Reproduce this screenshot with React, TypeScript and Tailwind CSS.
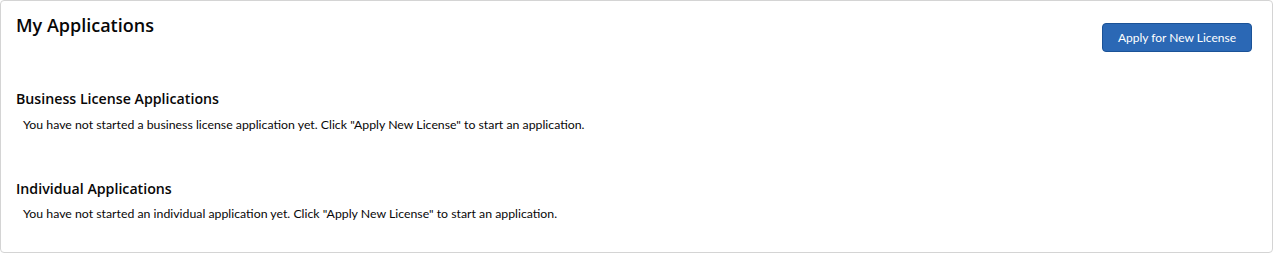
const heading = { fontFamily: '"Open Sans", "Noto Sans", sans-serif' };

export default function App() {
  return (
    <div className="h-[254px] w-[1273px] bg-white" style={{ fontFamily: 'Lato, "Open Sans", sans-serif' }}>
      <div className="flex h-[253px] flex-col rounded border border-[#d4d4d4] px-[15px] pt-[13px] text-[#080707]">
        <div className="flex items-start justify-between">
          <h1 className="text-[18px] font-semibold leading-[22px]" style={heading}>
            My Applications
          </h1>
          <button
            type="button"
            className="mt-[9px] mr-[5px] h-[29px] rounded-[4px] border border-[#1b5297] bg-[#2b68b5] px-[15px] text-[12px] leading-[27px] text-white"
          >
            Apply for New License
          </button>
        </div>

        <section className="mt-[37px]">
          <h2 className="text-[14.2px] font-semibold leading-[20px]" style={heading}>
            Business License Applications
          </h2>
          <p className="mt-[7px] pl-[7px] text-[12.3px] leading-[18px]">
            You have not started a business license application yet. Click "Apply New License" to start an application.
          </p>
        </section>

        <section className="mt-[45px]">
          <h2 className="text-[14.2px] font-semibold leading-[20px]" style={heading}>
            Individual Applications
          </h2>
          <p className="mt-[6px] pl-[7px] text-[12.3px] leading-[18px]">
            You have not started an individual application yet. Click "Apply New License" to start an application.
          </p>
        </section>
      </div>
    </div>
  );
}
